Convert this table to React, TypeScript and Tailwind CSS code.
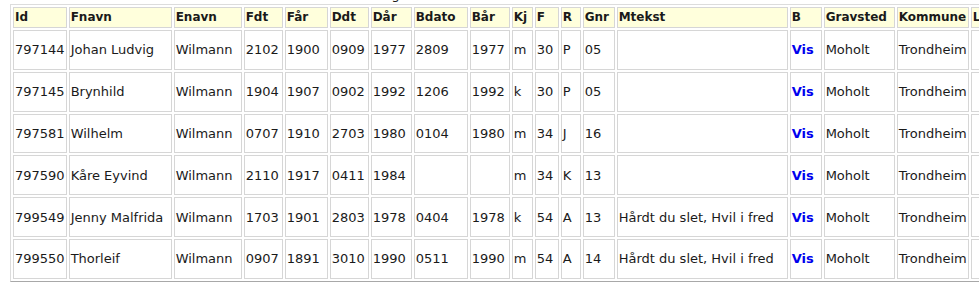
import React from 'react';

// header label + column width class (widths read off the reference)
const columns: [string, string][] = [
  ['Id', 'w-[53px]'],
  ['Fnavn', 'w-[103px]'],
  ['Enavn', 'w-[68px]'],
  ['Fdt', 'w-[39px]'],
  ['Får', 'w-[43px]'],
  ['Ddt', 'w-[39px]'],
  ['Dår', 'w-[41px]'],
  ['Bdato', 'w-[54px]'],
  ['Bår', 'w-[40px]'],
  ['Kj', 'w-[21px]'],
  ['F', 'w-[24px]'],
  ['R', 'w-[20px]'],
  ['Gnr', 'w-[32px]'],
  ['Mtekst', 'w-[171px]'],
  ['B', 'w-[32px]'],
  ['Gravsted', 'w-[71px]'],
  ['Kommune', 'w-[72px]'],
  ['Lenke', 'w-[110px]'],
];

const rows: string[][] = [
  ['797144', 'Johan Ludvig', 'Wilmann', '2102', '1900', '0909', '1977', '2809', '1977', 'm', '30', 'P', '05', '', 'Vis', 'Moholt', 'Trondheim', ''],
  ['797145', 'Brynhild', 'Wilmann', '1904', '1907', '0902', '1992', '1206', '1992', 'k', '30', 'P', '05', '', 'Vis', 'Moholt', 'Trondheim', ''],
  ['797581', 'Wilhelm', 'Wilmann', '0707', '1910', '2703', '1980', '0104', '1980', 'm', '34', 'J', '16', '', 'Vis', 'Moholt', 'Trondheim', ''],
  ['797590', 'Kåre Eyvind', 'Wilmann', '2110', '1917', '0411', '1984', '', '', 'm', '34', 'K', '13', '', 'Vis', 'Moholt', 'Trondheim', ''],
  ['799549', 'Jenny Malfrida', 'Wilmann', '1703', '1901', '2803', '1978', '0404', '1978', 'k', '54', 'A', '13', 'Hårdt du slet, Hvil i fred', 'Vis', 'Moholt', 'Trondheim', ''],
  ['799550', 'Thorleif', 'Wilmann', '0907', '1891', '3010', '1990', '0511', '1990', 'm', '54', 'A', '14', 'Hårdt du slet, Hvil i fred', 'Vis', 'Moholt', 'Trondheim', ''],
];

export default function App() {
  return (
    <div className="w-[979px] h-[287px] overflow-hidden bg-white font-['DejaVu_Sans','Verdana',sans-serif] text-[13px] text-[#1a1a1a]">
      {/* pager line, only its lowest pixels are in view */}
      <div className="h-[2px] overflow-hidden flex items-end pl-[290px]">
        <div className="leading-[15px] whitespace-nowrap">
          [ Første ] [ Forrige ] [ Neste ] [ Siste ] &nbsp; &nbsp; &nbsp; &nbsp; &nbsp; &nbsp; &nbsp; &nbsp; &nbsp; &nbsp; &nbsp; &nbsp; &nbsp; &nbsp; (side 1)
        </div>
      </div>
      <div className="mt-[2px] ml-[10px]">
        <table className="w-max border-separate border-spacing-[2px] border border-t-[#dcdcdc] border-l-[#dcdcdc] border-r-[#a8a8a8] border-b-[#a8a8a8] leading-[15px]">
          <thead>
            <tr>
              {columns.map(([c, w]) => (
                <th key={c} className={`${w} h-[21px] px-[1px] py-0 text-left text-[12px] font-bold whitespace-nowrap bg-[#ffffdc] border border-[#d6d6d6]`}>
                  {c}
                </th>
              ))}
            </tr>
          </thead>
          <tbody>
            {rows.map(r => (
              <tr key={r[0]}>
                {r.map((v, i) => (
                  <td key={i} className="h-[39.8px] px-[1px] py-0 whitespace-nowrap border border-[#d6d6d6] align-middle">
                    {v === 'Vis' ? <span className="font-bold text-[#0000ee] cursor-pointer">Vis</span> : v}
                  </td>
                ))}
              </tr>
            ))}
          </tbody>
        </table>
      </div>
    </div>
  );
}
